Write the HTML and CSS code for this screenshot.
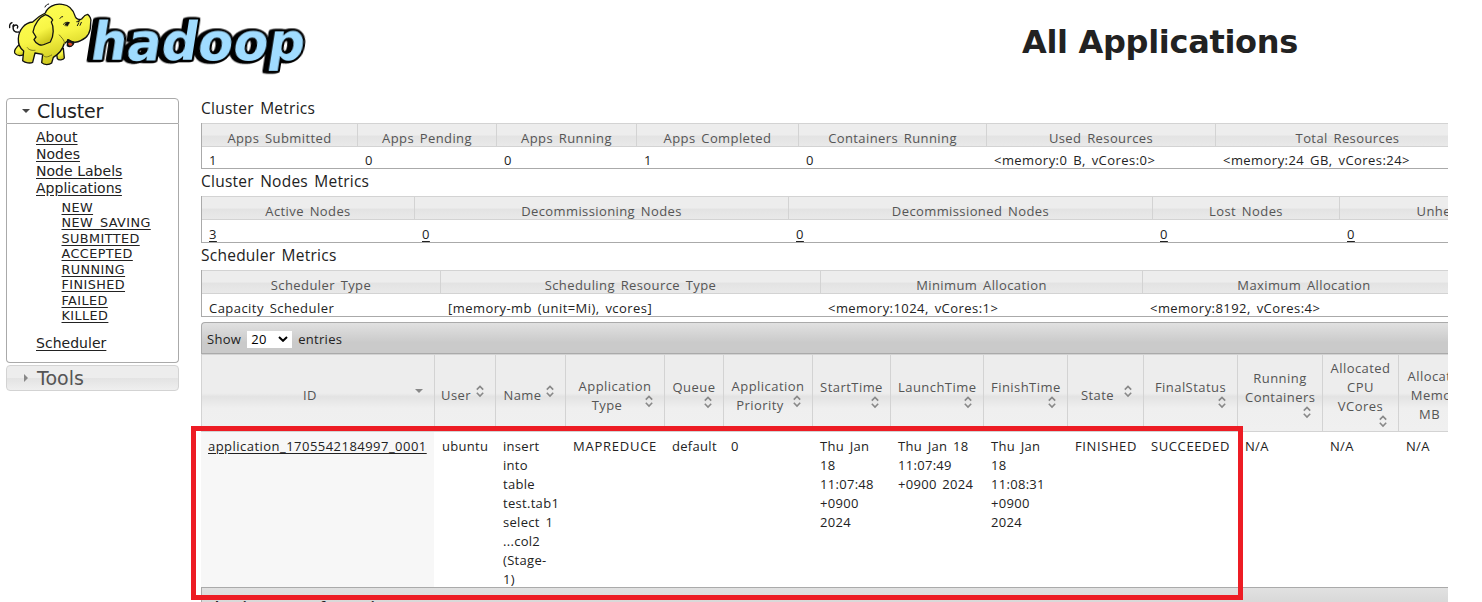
FILE: index.html
```html
<!DOCTYPE html>
<html lang="en">
<head>
<meta charset="utf-8">
<title>All Applications</title>
<link rel="stylesheet" href="styles.css">
</head>
<body>
<svg class="defs" width="0" height="0">
  <symbol id="sort" viewBox="0 0 16 16"><path d="M4.8 6.6 8 3.4l3.2 3.2M4.8 9.8 8 13l3.2-3.2" fill="none" stroke="#888" stroke-width="1.6"/></symbol>
  <symbol id="down" viewBox="0 0 16 16"><path d="M4 6h8l-4 4z" fill="#888"/></symbol>
</svg>
<header class="top">
  <svg class="logo" viewBox="0 0 960 240" width="320" height="80">
    <defs>
      <linearGradient id="skin" x1="0" y1="0" x2="0.35" y2="1"><stop offset="0" stop-color="#ffff55"/><stop offset=".6" stop-color="#f7f545"/><stop offset="1" stop-color="#cfc91e"/></linearGradient>
    </defs>
    <g class="word" transform="translate(266 180) skewX(-9)">
      <text textLength="642" lengthAdjust="spacingAndGlyphs">hadoop</text>
    </g>
    <g fill="url(#skin)" stroke="#111" stroke-width="4" stroke-linejoin="round" stroke-linecap="round">
      <path d="M56 96C38 98 36 82 44 76C51 73 56 79 52 84M29 83C28 76 31 70 36 68M39 82C38 79 39 76 41 74" fill="none"/>
      <path d="M60 132C48 142 42 152 44 159C50 168 62 168 72 164L88 146Z"/>
      <path d="M168 150L172 176C176 182 190 180 193 174L190 145Z"/>
      <path d="M98 66C74 68 56 90 55 116C54 134 62 146 71 153L68 182C76 189 91 191 98 187L105 159L128 163L125 188C132 196 148 195 155 189L160 172C176 162 188 149 192 132L206 120C214 128 231 129 242 122C264 113 273 92 272 68C276 59 268 46 263 43C254 44 251 49 245 57C237 61 229 57 226 50C220 28 207 15 187 13C163 9 142 22 136 39C122 45 108 56 98 66Z"/>
      <path d="M203 119L202 137C210 143 219 138 222 128Z" fill="#222"/>
      <path d="M204 130C209 126 216 129 217 134C212 139 206 138 204 130Z" fill="#e84a24" stroke="none"/>
      <path d="M136 44C119 51 103 71 99 96L108 111L102 119C109 134 124 139 136 132L151 126C162 108 162 80 154 66L158 60C153 50 145 47 136 44Z"/>
      <path d="M180 55C182 51 185 50 188 50M190 73C195 67 202 65 208 68M236 69L232 77M244 67L240 76M135 21C137 16 141 13 146 12" fill="none" stroke-width="3"/>
      <path d="M194 76C197 67 203 66 208 68L203 78ZM229 65L241 59L237 66Z" fill="#111" stroke-width="1"/>
      <path d="M82 143C87 151 98 152 105 151M155 165C143 172 134 174 128 164M194 132C194 119 184 113 178 105" fill="none" stroke="#77751c" stroke-width="3"/>
    </g>
  </svg>
  <h1 class="title">All Applications</h1>
</header>
<div class="page">
  <nav class="side">
    <h3 class="side-head"><svg width="10" height="6" viewBox="0 0 10 6"><path d="M1 1h8L5 5z" fill="#454545"/></svg>Cluster</h3>
    <div class="side-body">
      <a>About</a><a>Nodes</a><a>Node Labels</a><a>Applications</a>
      <div class="sub"><a>NEW</a><a>NEW_SAVING</a><a>SUBMITTED</a><a>ACCEPTED</a><a>RUNNING</a><a>FINISHED</a><a>FAILED</a><a>KILLED</a></div>
      <a>Scheduler</a>
    </div>
    <h3 class="side-head closed"><svg width="10" height="8" viewBox="0 0 10 8"><path d="M3 0v8l4-4z" fill="#888"/></svg>Tools</h3>
  </nav>
  <main class="content">
    <h2>Cluster Metrics</h2>
    <div class="metrics cluster">
      <b>Apps Submitted</b><b>Apps Pending</b><b>Apps Running</b><b>Apps Completed</b><b>Containers Running</b><b>Used Resources</b><b>Total Resources</b>
      <span>1</span><span>0</span><span>0</span><span>1</span><span>0</span><span>&lt;memory:0 B, vCores:0&gt;</span><span>&lt;memory:24 GB, vCores:24&gt;</span>
    </div>
    <h2>Cluster Nodes Metrics</h2>
    <div class="metrics nodes">
      <b>Active Nodes</b><b>Decommissioning Nodes</b><b>Decommissioned Nodes</b><b>Lost Nodes</b><b>Unhealthy Nodes</b>
      <span><a>3</a></span><span><a>0</a></span><span><a>0</a></span><span><a>0</a></span><span><a>0</a></span>
    </div>
    <h2>Scheduler Metrics</h2>
    <div class="metrics sched">
      <b>Scheduler Type</b><b>Scheduling Resource Type</b><b>Minimum Allocation</b><b>Maximum Allocation</b>
      <span>Capacity Scheduler</span><span>[memory-mb (unit=Mi), vcores]</span><span>&lt;memory:1024, vCores:1&gt;</span><span>&lt;memory:8192, vCores:4&gt;</span>
    </div>
    <div class="toolbar">Show <span class="select">20<svg width="10" height="6" viewBox="0 0 10 6"><path d="M1 1l4 3.8L9 1" fill="none" stroke="#000" stroke-width="2"/></svg></span> entries</div>
    <div class="apps heads">
      <div><p>ID<svg><use href="#down"/></svg></p></div>
      <div class="tight"><p>User<svg><use href="#sort"/></svg></p></div>
      <div><p>Name<svg><use href="#sort"/></svg></p></div>
      <div><p>Application<br>Type<svg><use href="#sort"/></svg></p></div>
      <div><p class="drop">Queue<svg><use href="#sort"/></svg></p></div>
      <div><p>Application<br>Priority<svg><use href="#sort"/></svg></p></div>
      <div><p class="drop">StartTime<svg><use href="#sort"/></svg></p></div>
      <div><p class="drop">LaunchTime<svg><use href="#sort"/></svg></p></div>
      <div><p class="drop">FinishTime<svg><use href="#sort"/></svg></p></div>
      <div><p>State<svg><use href="#sort"/></svg></p></div>
      <div><p class="drop">FinalStatus<svg><use href="#sort"/></svg></p></div>
      <div><p class="drop">Running<br>Containers<svg><use href="#sort"/></svg></p></div>
      <div><p class="drop">Allocated<br>CPU<br>VCores<svg><use href="#sort"/></svg></p></div>
      <div><p>Allocated<br>Memory<br>MB<svg><use href="#sort"/></svg></p></div>
    </div>
    <div class="apps row">
      <div class="sorted"><a>application_1705542184997_0001</a></div>
      <div>ubuntu</div>
      <div>insert<br>into<br>table<br>test.tab1<br>select 1<br>...col2<br>(Stage-<br>1)</div>
      <div class="caps">MAPREDUCE</div>
      <div>default</div>
      <div>0</div>
      <div>Thu Jan<br>18<br>11:07:48<br>+0900<br>2024</div>
      <div>Thu Jan 18<br>11:07:49<br>+0900 2024</div>
      <div>Thu Jan<br>18<br>11:08:31<br>+0900<br>2024</div>
      <div class="state">FINISHED</div>
      <div class="state">SUCCEEDED</div>
      <div>N/A</div><div>N/A</div><div>N/A</div>
    </div>
    <div class="footer">Showing 1 to 1 of 1 entries</div>
  </main>
</div>
<div class="highlight"></div>
</body>
</html>
```
FILE: styles.css
```css
* { box-sizing: border-box; }
body { margin: 0; width: 1482px; height: 602px; overflow: hidden; position: relative; background: #fff; color: #222; font-family: "DejaVu Sans", sans-serif; }
h1, h2, h3, p { margin: 0; font-weight: normal; }
a { text-decoration: underline; text-underline-offset: 2px; }
.defs { display: block; }
.top { display: flex; height: 98px; }
.logo { display: block; flex: none; }
.word { filter: drop-shadow(-6px 0 0 #000) drop-shadow(-6px 1px 0 #000); }
.word text { font: bold 156px "DejaVu Sans", sans-serif; fill: #a0dcff; stroke: #000; stroke-width: 14px; stroke-linejoin: round; paint-order: stroke; }
.title { padding-left: 702px; padding-top: 22px; font-size: 32px; line-height: 40px; font-weight: bold; letter-spacing: -.32px; white-space: nowrap; }
.page { display: flex; }
.side { width: 173px; margin-left: 6px; flex: none; }
.side-head { display: flex; align-items: center; gap: 6px; height: 26px; padding-left: 14px; border: 1px solid #aaa; border-radius: 4px 4px 0 0; font-size: 19px; letter-spacing: -.2px; }
.side-head.closed { margin-top: 2px; border-color: #d3d3d3; border-radius: 4px; color: #555; background: linear-gradient(#ededed 0 50%, #e3e3e3 51%, #efefef); letter-spacing: 0; }
.side-body { display: flex; flex-direction: column; align-items: flex-start; height: 239px; padding: 5px 0 0 29px; border: 1px solid #aaa; border-top: 0; border-radius: 0 0 4px 4px; font-size: 14px; line-height: 17px; letter-spacing: .03px; }
.sub { display: flex; flex-direction: column; align-items: flex-start; padding: 3px 0 11px 25.5px; font-size: 12.8px; line-height: 15.43px; letter-spacing: .42px; }
.content { width: 1247px; height: 504px; margin-left: 22px; overflow: hidden; font-family: "Open Sans", sans-serif; font-size: 13px; letter-spacing: .45px; word-spacing: 2px; white-space: nowrap; }
.content h2 { height: 25px; padding-top: 1px; font-size: 15.5px; line-height: 19px; letter-spacing: .25px; }
.content h2:not(:first-child) { height: 27px; padding-top: 3px; }
.metrics { display: grid; border-left: 1px solid #aaa; border-bottom: 1px solid #aaa; grid-template-rows: 24px 22px; }
.cluster { grid-template-columns: 156px 139px 140px 162px 188px 229px 264px; height: 46px; grid-template-rows: 24px 21px; }
.nodes { grid-template-columns: 213px 374px 364px 187px 267px; }
.sched { grid-template-columns: 239px 380px 322px 323px; }
.metrics b { font-weight: normal; text-align: center; color: #555; line-height: 19px; padding-top: 5px; border: 1px solid #d3d3d3; border-left: 0; background: linear-gradient(#ededed 0 50%, #e3e3e3 55%, #e9e9e9); letter-spacing: .4px; overflow: hidden; }
.metrics span { padding: 5px 0 0 7px; line-height: 18px; overflow: hidden; }
.cluster span { padding-top: 4px; }
.toolbar { display: flex; align-items: center; gap: 6px; height: 32px; margin-top: 5px; padding: 2px 0 0 5px; border: 1px solid #aaa; border-right: 0; border-radius: 4px 0 0 0; background: linear-gradient(#e1e1e1, #cacaca 65%, #cacaca); letter-spacing: .3px; }
.select { display: inline-flex; align-items: center; width: 45px; height: 17px; padding: 0 4px; justify-content: space-between; background: #fff; color: #000; }
.apps { display: grid; grid-template-columns: 234px 61px 70px 99px 59px 89px 78px 93px 84px 76px 94px 85px 76px 78px; line-height: 19px; }
.heads { height: 78px; grid-template-rows: 78px; }
.heads div { display: flex; align-items: center; padding: 5px 7px 0; border: 1px solid #d3d3d3; border-left: 0; color: #555; background: linear-gradient(#ededed 0 50%, #e3e3e3 55%, #efefef 70%, #f0f0f0); }
.heads div:first-child { border-left: 1px solid #d3d3d3; }
.heads div.tight { padding-left: 5px; }
.heads p { width: 100%; text-align: center; }
.heads svg { float: right; width: 16px; height: 16px; margin-top: -3px; }
.heads .drop svg { float: none; display: block; margin: -3px 0 3px auto; }
.row { height: 155px; letter-spacing: .3px; }
.row div { padding: 5px 0 0 7px; height: 155px; }
.row div.sorted { margin-right: 1px; background: #f7f7f7; letter-spacing: .47px; }
.row div.caps { letter-spacing: .75px; }
.row div.state { letter-spacing: .6px; }
.footer { height: 40px; padding: 9px 0 0 6px; border: 1px solid #aaa; border-right: 0; background: linear-gradient(#e1e1e1, #cacaca); font-weight: bold; line-height: 19px; letter-spacing: -.05px; }
.highlight { position: absolute; left: 191px; top: 426px; width: 1052px; height: 174px; border: 5px solid #ed1c24; }
```
